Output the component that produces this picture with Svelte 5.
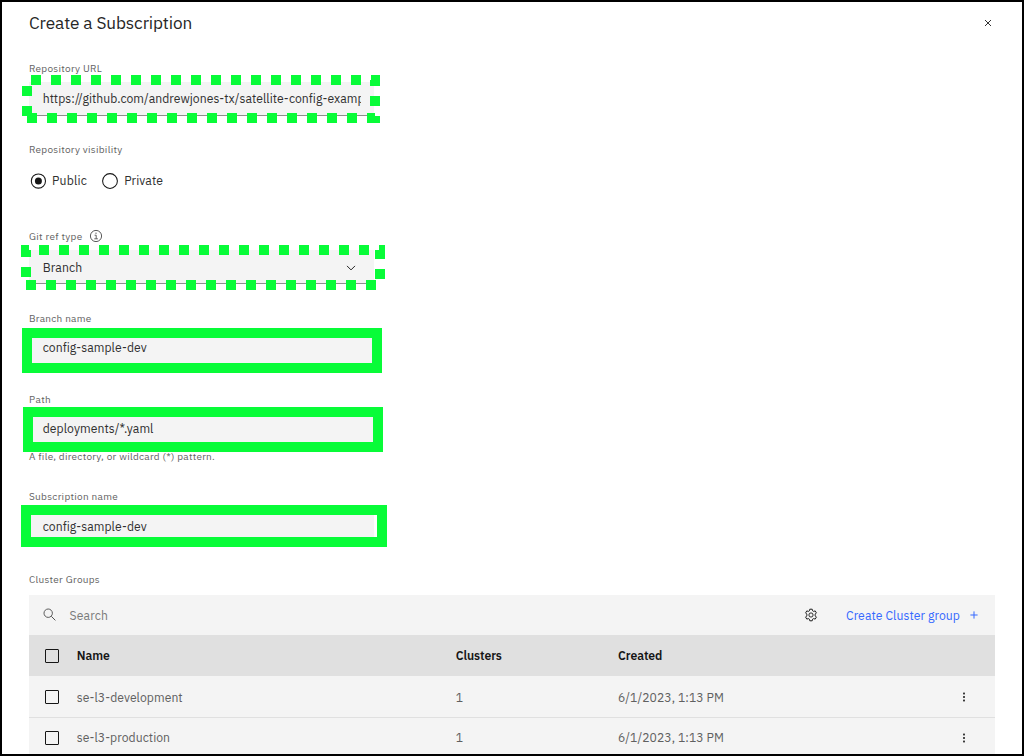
<script>
  // Spread the letters of a text evenly so that it takes the given width.
  function fit(node, width) {
    const natural = node.getBoundingClientRect().width;
    const count = node.textContent.length;
    node.style.letterSpacing = `${(width - natural) / count}px`;
  }

  const range = (start, count) => Array.from({ length: count }, (_, i) => start + i * 20);

  const rows = [
    { name: 'se-l3-development', width: 106, clusters: '1', created: '6/1/2023, 1:13 PM' },
    { name: 'se-l3-production', width: 93.4, clusters: '1', created: '6/1/2023, 1:13 PM' }
  ];
</script>

<div class="panel">
  <header>
    <h1><span use:fit={163.2}>Create a Subscription</span></h1>
    <button class="close" aria-label="Close">
      <svg width="8" height="8" viewBox="0 0 8 8"><path d="M1 1l6 6M7 1L1 7" stroke="#333" stroke-width="1" /></svg>
    </button>
  </header>

  <div class="label first"><span use:fit={73}>Repository URL</span></div>
  <div class="field url"><div class="clip"><span use:fit={321.8}>https://github.com/andrewjones-tx/satellite-config-examp</span></div></div>

  <div class="label visibility"><span use:fit={93.5}>Repository visibility</span></div>
  <div class="radios">
    <div class="option">
      <svg width="17" height="16" viewBox="0 0 17 16"><circle cx="8.4" cy="8" r="7.1" fill="none" stroke="#161616" stroke-width="1.05" /><circle cx="8.4" cy="8" r="3.5" fill="#161616" /></svg>
      <span use:fit={35}>Public</span>
    </div>
    <div class="option second">
      <svg width="16" height="16" viewBox="0 0 16 16"><circle cx="8" cy="8" r="7.4" fill="none" stroke="#161616" stroke-width="1.05" /></svg>
      <span use:fit={39}>Private</span>
    </div>
  </div>

  <div class="label ref">
    <span use:fit={53.5}>Git ref type</span>
    <svg width="14" height="14" viewBox="0 0 14 14" fill="none" stroke="#525252"><circle cx="7" cy="7" r="5.6" stroke-width=".95" /><path d="M5.6 6.2h1.6v3.6M5.3 9.8h3.6" stroke-width=".9" /><circle cx="7" cy="4.2" r=".65" fill="#525252" stroke="none" /></svg>
  </div>
  <div class="field select">
    <span use:fit={39.5}>Branch</span>
    <svg width="10" height="6" viewBox="0 0 10 6"><path d="M1 .9l4 4 4-4" fill="none" stroke="#262626" stroke-width="1" /></svg>
  </div>

  <div class="label branch"><span use:fit={62.5}>Branch name</span></div>
  <div class="field raised"><span use:fit={104}>config-sample-dev</span></div>

  <div class="label path"><span use:fit={22.2}>Path</span></div>
  <div class="field raised"><span use:fit={110.8}>deployments/*.yaml</span></div>
  <div class="label helper"><span use:fit={186}>A file, directory, or wildcard (*) pattern.</span></div>

  <div class="label subscription"><span use:fit={89}>Subscription name</span></div>
  <div class="field raised"><span use:fit={104}>config-sample-dev</span></div>

  <div class="label groups"><span use:fit={71}>Cluster Groups</span></div>
  <section class="table">
    <div class="toolbar">
      <svg class="glass" width="14" height="14" viewBox="0 0 14 14" fill="none" stroke="#525252"><circle cx="5.2" cy="5.2" r="4.2" stroke-width=".95" /><path d="M8.3 8.3l4.1 4.1" /></svg>
      <span class="search" use:fit={38.6}>Search</span>
      <svg class="gear" width="14" height="14" viewBox="0 0 14 14" fill="none" stroke="#161616" stroke-linejoin="round"><circle cx="7" cy="7" r="2.1" stroke-width=".9" /><path stroke-width=".95" d="M5.8 1.2h2.4l.4 1.6 1 .6 1.6-.5 1.2 2-1.2 1.2v1.8l1.2 1.2-1.2 2-1.6-.5-1 .6-.4 1.6H5.8l-.4-1.6-1-.6-1.6.5-1.2-2 1.2-1.2V6.1L1.6 4.9l1.2-2 1.6.5 1-.6z" /></svg>
      <span class="create" use:fit={114}>Create Cluster group</span>
      <svg class="plus" width="8" height="8" viewBox="0 0 8 8"><path d="M4 .4v7.2M.4 4h7.2" stroke="#3568ff" stroke-width="1" /></svg>
    </div>
    <div class="row head">
      <div class="check"></div>
      <div><span use:fit={33}>Name</span></div>
      <div><span use:fit={46.2}>Clusters</span></div>
      <div><span use:fit={44.4}>Created</span></div>
      <div></div>
    </div>
    {#each rows as row}
      <div class="row">
        <div class="check"></div>
        <div><span use:fit={row.width}>{row.name}</span></div>
        <div><span>{row.clusters}</span></div>
        <div><span use:fit={106}>{row.created}</span></div>
        <svg width="4" height="12" viewBox="0 0 4 12" fill="#262626"><rect x="1.1" y="1.6" width="1.8" height="1.8" /><rect x="1.1" y="5.1" width="1.8" height="1.8" /><rect x="1.1" y="8.6" width="1.8" height="1.8" /></svg>
      </div>
    {/each}
  </section>

  <svg class="marks" width="1024" height="756" viewBox="0 0 1024 756" shape-rendering="crispEdges">
    <g fill="#08fc38">
      {#each range(31, 17) as x}<rect {x} y="75" width="10" height="10" />{/each}
      {#each range(27, 17) as x}<rect {x} y="113" width="10" height="10" />{/each}
      <path d="M371 75h9v11h-10v-6h1zM370 96h10v10h-10zM367 113h8v3h5v7h-13zM22 86h10v10H22zM22 106h10v10H22z" />
      {#each range(39, 17) as x}<rect {x} y="245" width="10" height="10" />{/each}
      {#each range(26, 18) as x}<rect {x} y="280" width="10" height="10" />{/each}
      <path d="M21 245h8v5h2v7H21zM21 267h10v10H21zM379 245h6v14h-10v-9h4zM375 269h10v10h-10z" />
    </g>
    <g fill="none" stroke="#08fc38" stroke-width="10">
      <rect x="27" y="333" width="350" height="35" />
      <rect x="28" y="412" width="350" height="35" />
      <rect x="26" y="510" width="356" height="32" />
    </g>
  </svg>
</div>

<style>
  :global(body) { margin: 0; background: #fff; }
  .panel {
    position: relative;
    box-sizing: border-box;
    width: 1024px;
    height: 756px;
    overflow: hidden;
    border: 2px solid #000;
    padding: 0 27px;
    background: #fff;
    color: #303030;
    font: 12.2px/20px "IBM Plex Sans", Roboto, sans-serif;
  }
  span { white-space: pre; }
  svg { display: block; flex: none; }
  header { display: flex; align-items: center; justify-content: space-between; height: 42px; }
  h1 { margin: 0; color: #262626; font-size: 17.2px; font-weight: 400; line-height: 24px; }
  .close { border: 0; padding: 0; margin-right: 3px; background: none; }
  .label { display: flex; height: 16px; color: #626262; font-size: 10px; line-height: 16px; }
  .first { margin: 17px 0 5px; }
  .visibility { margin: 26px 0 13px; }
  .ref { margin: 38px 0 5px; align-items: center; }
  .ref svg { margin: -2px 0 0 6.5px; }
  .branch { margin: 27px 0 4px; }
  .path { margin: 27px 0 4px; }
  .helper { margin-top: 3px; }
  .subscription { margin: 24px 0 5px; }
  .groups { margin: 28px 0 7px; }
  .field {
    box-sizing: border-box;
    display: flex;
    align-items: center;
    width: 345px;
    height: 34px;
    padding: 0 13px 0 13.7px;
    border-bottom: 1px solid #8d8d8d;
    background: #f4f4f4;
  }
  .url, .raised { padding-bottom: 2px; }
  .clip { overflow: hidden; width: 318.3px; }
  .select { justify-content: space-between; padding-right: 18px; }
  .select svg { margin-top: 2px; }
  .radios { display: flex; height: 20px; margin-left: 1px; }
  .option { display: flex; align-items: center; gap: 5px; }
  .option span { margin-top: -2px; }
  .second { margin-left: 15px; gap: 6.2px; }
  .toolbar { display: flex; align-items: center; box-sizing: border-box; height: 40px; padding-left: 14px; background: #f4f4f4; }
  .search { margin-left: 12.5px; color: #7a7a7a; }
  .gear { margin-left: auto; }
  .create { margin-left: 28px; color: #3568ff; }
  .plus { margin: -1px 17px 0 10px; }
  .row {
    display: grid;
    grid-template-columns: 31.7px 379px 162.3px 1fr 4px;
    align-items: center;
    box-sizing: border-box;
    height: 41px;
    padding: 0 29px 0 16px;
    border-bottom: 1px solid #e0e0e0;
    background: #f4f4f4;
    color: #606060;
  }
  .row:nth-child(3) { height: 42px; }
  .row:last-child { height: 39px; }
  .row:last-child .check { margin-top: 2px; }
  .row:last-child svg { margin-top: 1px; }
  .head { background: #e0e0e0; color: #161616; font-weight: 600; }
  .head .check { margin-top: 2px; }
  .check { box-sizing: border-box; width: 14px; height: 14px; border: 1px solid #161616; border-radius: 1px; }
  .marks { position: absolute; left: -2px; top: -2px; pointer-events: none; }
</style>
